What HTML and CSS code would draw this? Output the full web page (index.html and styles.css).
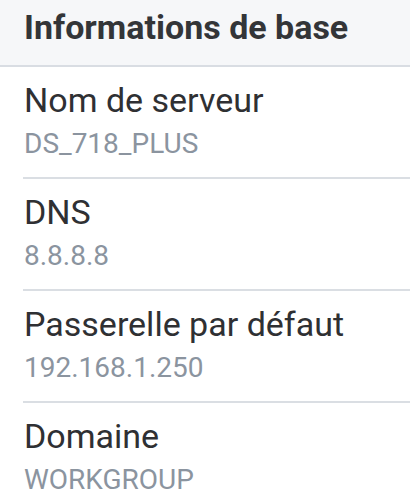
FILE: index.html
```html
<!DOCTYPE html>
<html lang="fr">
<head>
<meta charset="utf-8">
<link rel="stylesheet" href="styles.css">
</head>
<body>
<div class="panel">
  <div class="section-header">Informations de base</div>
  <div class="list">
    <div class="item">
      <div class="item-title">Nom de serveur</div>
      <div class="item-value">DS_718_PLUS</div>
    </div>
    <div class="item">
      <div class="item-title">DNS</div>
      <div class="item-value">8.8.8.8</div>
    </div>
    <div class="item">
      <div class="item-title">Passerelle par défaut</div>
      <div class="item-value">192.168.1.250</div>
    </div>
    <div class="item">
      <div class="item-title">Domaine</div>
      <div class="item-value">WORKGROUP</div>
    </div>
  </div>
</div>
</body>
</html>
```
FILE: styles.css
```css
html, body {
  margin: 0;
  padding: 0;
  background: #ffffff;
}
body {
  font-family: Roboto, "Noto Sans", sans-serif;
  width: 410px;
  height: 500px;
  overflow: hidden;
}
.panel {
  display: flex;
  flex-direction: column;
}
.section-header {
  background: #f6f7f9;
  border-bottom: 2px solid #d9dde3;
  height: 67px;
  box-sizing: border-box;
  padding: 7px 0 0 24px;
  font-size: 34px;
  font-weight: 700;
  color: #333538;
  line-height: 40px;
}
.list {
  display: flex;
  flex-direction: column;
  padding-left: 23px;
}
.item {
  display: flex;
  flex-direction: column;
  gap: 8px;
  height: 112px;
  box-sizing: border-box;
  padding: 13px 0 0 1px;
  border-bottom: 2px solid #dadee3;
}
.item-title {
  font-size: 34px;
  line-height: 40px;
  color: #2f3033;
}
.item-value {
  font-size: 28px;
  line-height: 32px;
  color: #8b949f;
}
```
